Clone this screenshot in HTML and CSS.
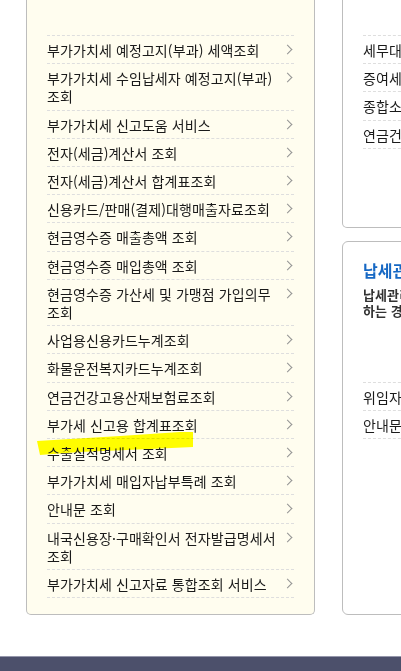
FILE: index.html
```html
<!DOCTYPE html>
<html lang="ko">
<head>
  <meta charset="UTF-8">
  <meta name="viewport" content="width=device-width, initial-scale=1.0">
  <title>부가가치세 조회/발급</title>
  <link rel="stylesheet" href="styles.css">
</head>
<body>
  <div class="wrap">
    <div class="panel panel-menu">
      <ul class="links">
        <li><span>부가가치세 예정고지(부과) 세액조회</span><i class="arrow"></i></li>
        <li><span>부가가치세 수임납세자 예정고지(부과) 조회</span><i class="arrow"></i></li>
        <li><span>부가가치세 신고도움 서비스</span><i class="arrow"></i></li>
        <li><span>전자(세금)계산서 조회</span><i class="arrow"></i></li>
        <li><span>전자(세금)계산서 합계표조회</span><i class="arrow"></i></li>
        <li><span>신용카드/판매(결제)대행매출자료조회</span><i class="arrow"></i></li>
        <li><span>현금영수증 매출총액 조회</span><i class="arrow"></i></li>
        <li><span>현금영수증 매입총액 조회</span><i class="arrow"></i></li>
        <li><span>현금영수증 가산세 및 가맹점 가입의무 조회</span><i class="arrow"></i></li>
        <li><span>사업용신용카드누계조회</span><i class="arrow"></i></li>
        <li><span>화물운전복지카드누계조회</span><i class="arrow"></i></li>
        <li><span>연금건강고용산재보험료조회</span><i class="arrow"></i></li>
        <li><span>부가세 신고용 합계표조회</span><i class="arrow"></i></li>
        <li class="marked">
          <svg class="marker" width="157" height="26" viewBox="0 0 157 26"><polygon points="0,10 83,5 143,1 156,1 156,16 113,18 43,21 3,24" fill="#ffff00"/></svg>
          <span>수출실적명세서 조회</span><i class="arrow"></i>
        </li>
        <li><span>부가가치세 매입자납부특례 조회</span><i class="arrow"></i></li>
        <li><span>안내문 조회</span><i class="arrow"></i></li>
        <li><span>내국신용장·구매확인서 전자발급명세서 조회</span><i class="arrow"></i></li>
        <li><span>부가가치세 신고자료 통합조회 서비스</span><i class="arrow"></i></li>
      </ul>
    </div>

    <div class="side">
      <div class="panel panel-top">
        <ul class="links">
          <li><span>세무대리인</span></li>
          <li><span>증여세</span></li>
          <li><span>종합소득세</span></li>
          <li><span>연금건강</span></li>
        </ul>
      </div>
      <div class="panel panel-box">
        <h3 class="box-title">납세관리인</h3>
        <p class="box-desc">납세관리인<br>하는 경우</p>
        <ul class="links">
          <li><span>위임자</span></li>
          <li><span>안내문</span></li>
        </ul>
      </div>
    </div>
  </div>

  <div class="footer"></div>
</body>
</html>
```

FILE: styles.css
```css
html, body {
  margin: 0;
  padding: 0;
  overflow: hidden;
  background: #fff;
}
body {
  font-family: "Noto Sans CJK KR", "Noto Sans", sans-serif;
  font-size: 14px;
  letter-spacing: 0.1px;
  color: #1a1a1a;
  width: 401px;
  height: 671px;
}
.wrap {
  display: flex;
  gap: 27px;
  padding-left: 26px;
  width: 700px;
}
.panel {
  box-sizing: border-box;
  border: 1px solid #bdbdbd;
  flex-shrink: 0;
}
.panel-menu {
  width: 289px;
  height: 615px;
  border-top: none;
  border-radius: 0 0 5px 5px;
  background-color: #fffdef;
  padding: 35px 20px 0;
}
.side {
  display: flex;
  flex-direction: column;
  gap: 13px;
  width: 289px;
  flex-shrink: 0;
}
.panel-top {
  height: 228px;
  border-top: none;
  border-radius: 0 0 5px 5px;
  padding: 35px 0 0 20px;
  background: #fff;
}
.panel-box {
  height: 374px;
  border-radius: 6px;
  padding: 18px 0 0 20px;
  background: #fff;
}
.links {
  list-style: none;
  margin: 0;
  padding: 0;
  border-top: 1px dashed #dedede;
}
.links li {
  position: relative;
  display: flex;
  justify-content: space-between;
  align-items: flex-start;
  padding: 5px 0 4px;
  line-height: 18.2px;
  border-bottom: 1px dashed #dedede;
  white-space: nowrap;
}
.panel-menu .links li {
  white-space: normal;
}
.links li span {
  position: relative;
  max-width: 234px;
}
.arrow {
  width: 6px;
  height: 6px;
  border-top: 1.5px solid #939393;
  border-right: 1.5px solid #939393;
  transform: rotate(45deg);
  margin: 5px 3px 0 0;
  flex-shrink: 0;
}
.marker {
  position: absolute;
  left: -10px;
  top: -8px;
  mix-blend-mode: multiply;
}
.box-title {
  margin: 0;
  font-size: 16px;
  line-height: 20px;
  color: #1668c4;
  font-weight: bold;
  white-space: nowrap;
}
.box-desc {
  margin: 7px 0 0;
  font-size: 13px;
  line-height: 16px;
  font-weight: bold;
  color: #333;
  white-space: nowrap;
}
.panel-box .links {
  margin-top: 63px;
}
.footer {
  margin-top: 41px;
  height: 20px;
  background: #4c506b;
  border-top: 1px solid #9597ab;
}
```
